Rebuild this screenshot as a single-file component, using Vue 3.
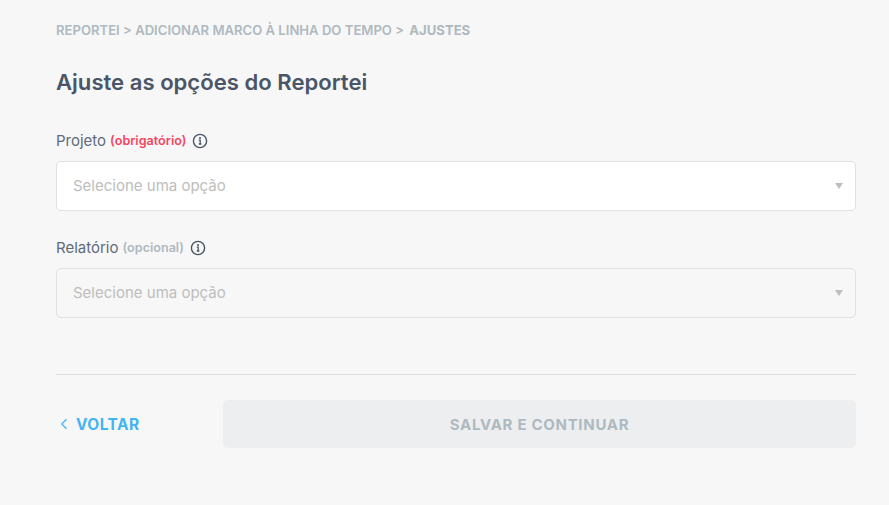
<template>
  <div class="page">
    <p class="crumbs">REPORTEI &gt; ADICIONAR MARCO À LINHA DO TEMPO &gt; <strong>AJUSTES</strong></p>
    <h1>Ajuste as opções do Reportei</h1>

    <div class="field">
      <div class="label">
        <span>Projeto</span>
        <span class="required">(obrigatório)</span>
        <svg class="info" width="16" height="16" viewBox="0 0 16 16" fill="none">
          <circle cx="8" cy="8" r="6.6" stroke="#4a5568" stroke-width="1.4" />
          <path d="M6.8 7.2H8.2V11M6.8 11H9.4" stroke="#4a5568" stroke-width="1.3" />
          <circle cx="8" cy="4.9" r="1" fill="#4a5568" />
        </svg>
      </div>
      <div class="select">
        <span>Selecione uma opção</span>
        <i class="caret"></i>
      </div>
    </div>

    <div class="field second">
      <div class="label">
        <span>Relatório</span>
        <span class="optional">(opcional)</span>
        <svg class="info" width="16" height="16" viewBox="0 0 16 16" fill="none">
          <circle cx="8" cy="8" r="6.6" stroke="#4a5568" stroke-width="1.4" />
          <path d="M6.8 7.2H8.2V11M6.8 11H9.4" stroke="#4a5568" stroke-width="1.3" />
          <circle cx="8" cy="4.9" r="1" fill="#4a5568" />
        </svg>
      </div>
      <div class="select disabled">
        <span>Selecione uma opção</span>
        <i class="caret"></i>
      </div>
    </div>

    <div class="actions">
      <a class="back">
        <svg width="8" height="12" viewBox="0 0 8 12" fill="none">
          <path d="M6.5 1.2L1.7 6L6.5 10.8" stroke="#42b4f5" stroke-width="1.3" />
        </svg>
        VOLTAR
      </a>
      <button class="save" disabled>SALVAR E CONTINUAR</button>
    </div>
  </div>
</template>

<script setup>
</script>

<style>
body {
  background: #f7f7f7;
}
</style>

<style scoped>
.page {
  box-sizing: border-box;
  width: 889px;
  height: 505px;
  padding: 22px 33px 0 56px;
  background: #f7f7f7;
  font-family: "Inter", "Liberation Sans", sans-serif;
  overflow: hidden;
}

.crumbs {
  margin: 0;
  font-size: 13.1px;
  line-height: 16px;
  font-weight: 600;
  color: #aeb9c0;
}

.crumbs strong {
  margin-left: 2px;
  font-weight: 700;
}

h1 {
  margin: 27px 0 0;
  font-size: 22.1px;
  line-height: 34px;
  font-weight: 600;
  color: #4a5568;
}

.field {
  margin-top: 31px;
}

.field.second {
  margin-top: 26px;
}

.label {
  display: flex;
  align-items: center;
  height: 20px;
  font-size: 15px;
  color: #5f6b7a;
}

.required,
.optional {
  margin-left: 4px;
  font-size: 12.6px;
  font-weight: 600;
}

.required {
  color: #f5465f;
}

.optional {
  color: #aeb9c0;
}

.info {
  margin: 1px 0 0 6px;
}

.select {
  display: flex;
  align-items: center;
  justify-content: space-between;
  box-sizing: border-box;
  height: 50px;
  margin-top: 11px;
  padding: 0 12px 1px 16px;
  background: #fff;
  border: 1px solid #dfe1e4;
  border-radius: 5px;
  font-size: 15px;
  color: #bdbdbd;
}

.select.disabled {
  background: #f7f7f7;
}

.caret {
  width: 0;
  height: 0;
  border-left: 4px solid transparent;
  border-right: 4px solid transparent;
  border-top: 6px solid #bdbdbd;
  margin-top: 1px;
}

.actions {
  display: flex;
  align-items: center;
  margin-top: 56px;
  padding-top: 25px;
  border-top: 1px solid #dddddd;
}

.back {
  display: flex;
  align-items: center;
  gap: 8px;
  width: 167px;
  padding-left: 4px;
  box-sizing: border-box;
  font-size: 15.4px;
  font-weight: 700;
  letter-spacing: 0.5px;
  color: #42b4f5;
}

.save {
  flex: 1;
  height: 48px;
  border: none;
  border-radius: 5px;
  background: #edeef0;
  font-family: inherit;
  font-size: 15px;
  font-weight: 700;
  letter-spacing: 0.7px;
  color: #aeb9c0;
}
</style>
